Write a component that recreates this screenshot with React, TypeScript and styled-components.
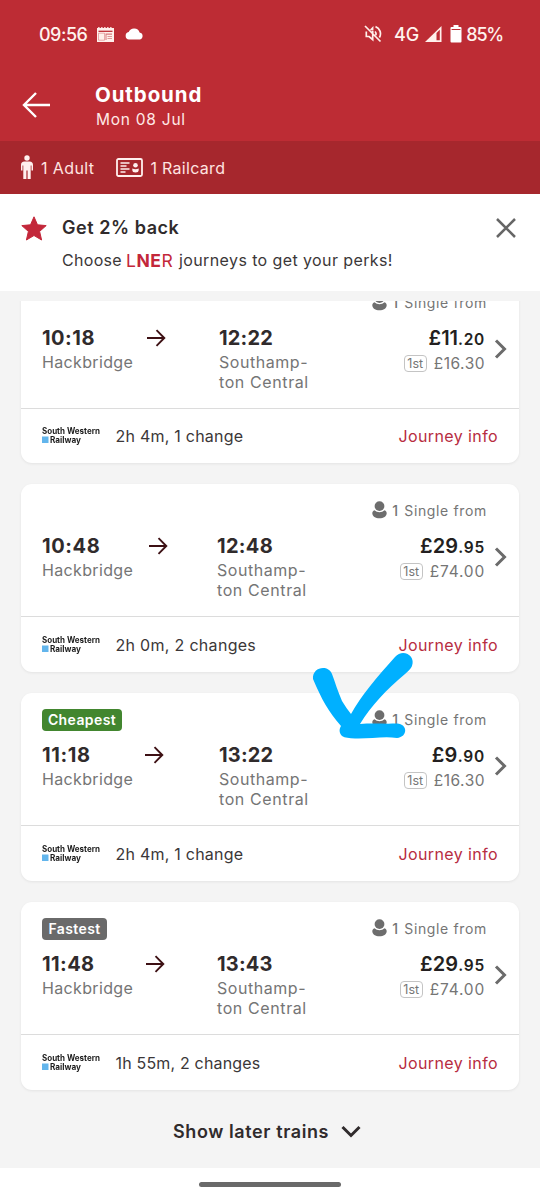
import React from "react";
import styled, { createGlobalStyle } from "styled-components";

const GlobalStyle = createGlobalStyle`
  * { box-sizing: border-box; }
  body {
    margin: 0;
    background: #fff;
    font-family: Inter, "Liberation Sans", sans-serif;
    font-size: 16px;
    color: #302b2c;
  }
`;

const Screen = styled.div`
  position: relative;
  width: 540px;
  height: 1200px;
  display: flex;
  flex-direction: column;
  overflow: hidden;
`;

/* Text with adjustable tracking */
const T = styled.span<{ $ls?: number; $l?: number }>`
  letter-spacing: ${(p) => p.$ls ?? 0}px;
  margin-left: ${(p) => p.$l ?? 0}px;
  white-space: nowrap;
`;

const Header = styled.header`
  height: 141px;
  background: #bd2c34;
  color: #fff;
`;
const StatusBar = styled.div`
  height: 68px;
  padding: 0 37px 0 39px;
  display: flex;
  align-items: center;
  font-size: 18px;
  font-weight: 500;
  color: #fff3ee;
`;
const StatusIcon = styled.svg<{ $l: number }>`
  display: block;
  flex: none;
  margin-left: ${(p) => p.$l}px;
`;
const StatusRight = styled.div`
  margin-left: auto;
  display: flex;
  align-items: center;
`;
const TitleRow = styled.div`
  display: flex;
  padding: 15px 0 0 22px;
`;
const BackIcon = styled.svg`
  display: block;
  margin-top: 9px;
`;
const TitleBlock = styled.div`
  margin-left: 45px;
`;
const Title = styled.div`
  font-size: 20.5px;
  line-height: 24px;
  font-weight: 700;
`;
const Subtitle = styled.div`
  font-size: 15.5px;
  line-height: 25px;
  padding-left: 1px;
  color: #ffe9e6;
`;

const PassengerBar = styled.div`
  height: 53px;
  background: #a6272d;
  color: #ffe4e1;
  display: flex;
  align-items: center;
  padding-left: 21px;
  font-size: 16px;
`;
const BarIcon = styled.svg<{ $l?: number; $r: number }>`
  display: block;
  flex: none;
  margin: 0 ${(p) => p.$r}px 0 ${(p) => p.$l ?? 0}px;
`;

const Promo = styled.section`
  height: 97px;
  background: #fff;
  display: flex;
  padding: 22px 23px 0 21px;
`;
const StarIcon = styled.svg`
  display: block;
  flex: none;
`;
const PromoText = styled.div`
  margin-left: 15px;
  flex: 1;
`;
const PromoTitle = styled.div`
  font-size: 18px;
  font-weight: 600;
  line-height: 24px;
`;
const PromoCopy = styled.div`
  display: flex;
  align-items: center;
  height: 24px;
  margin-top: 8px;
  font-size: 16px;
  color: #3b3738;
`;
const Brand = styled.span`
  width: 48px;
  margin: 0 5px 0 4px;
  color: #c3273a;
  font-size: 17.5px;
  letter-spacing: 0.6px;
  white-space: nowrap;
  b { font-weight: 700; }
`;

const List = styled.main`
  height: 877px;
  background: #f4f4f4;
  padding-top: 10px;
`;
const Scroller = styled.div`
  height: 867px;
  overflow: hidden;
`;
const Cards = styled.div`
  margin-top: -25px;
  padding: 0 21px;
  display: flex;
  flex-direction: column;
  gap: 21px;
`;
const Card = styled.article`
  height: 188px;
  display: flex;
  flex-direction: column;
  background: #fff;
  border-radius: 11px;
  box-shadow: 0 1px 3px rgba(0, 0, 0, 0.07);
  &:first-child { height: 187px; }
`;
const Body = styled.div`
  height: 133px;
  padding: 16px 0 0 21px;
  border-bottom: 1px solid #dcdcdc;
`;
const TopRow = styled.div`
  height: 22px;
  display: flex;
  align-items: center;
  padding-right: 32px;
`;
const Tag = styled.span<{ $bg: string; $w: number }>`
  width: ${(p) => p.$w}px;
  height: 22px;
  border-radius: 4px;
  background: ${(p) => p.$bg};
  color: #fff;
  font-size: 14px;
  font-weight: 600;
  line-height: 22px;
  text-align: center;
`;
const FareLabel = styled.div`
  margin: -2px 0 0 auto;
  display: flex;
  align-items: center;
  font-size: 14px;
  color: #757575;
`;
const PersonIcon = styled.svg`
  display: block;
  margin: 0 5px 0 0;
`;
const Count = styled.span`
  width: 12px;
  font-weight: 500;
`;
const MainRow = styled.div`
  margin-top: 12px;
  display: flex;
`;
const Route = styled.div<{ $origin: number }>`
  display: grid;
  grid-template-columns: ${(p) => p.$origin}px auto;
  grid-template-rows: 24px 43px;
`;
const TimeCell = styled.div`
  display: flex;
  align-items: center;
  font-size: 20px;
  font-weight: 700;
`;
const ArrowSlot = styled.div`
  flex: 1;
  display: flex;
  justify-content: center;
`;
const Station = styled.div`
  padding-top: 2px;
  font-size: 16px;
  line-height: 20px;
  color: #757575;
`;
const Fares = styled.div`
  margin-left: auto;
  display: flex;
  flex-direction: column;
  align-items: flex-end;
`;
const Price = styled.div`
  height: 24px;
  line-height: 24px;
  font-size: 20px;
  font-weight: 600;
  white-space: nowrap;
  color: #231f20;
`;
const Pence = styled.span`
  font-size: 15.5px;
  font-weight: 600;
`;
const FirstClass = styled.div`
  height: 24px;
  margin-top: 1px;
  display: flex;
  align-items: center;
  font-size: 15.5px;
  color: #757575;
`;
const ClassBadge = styled.span`
  width: 23px;
  height: 17px;
  margin: 1px 7px 0 0;
  border: 1px solid #c4c4c4;
  border-radius: 4px;
  font-size: 12.5px;
  line-height: 15px;
  text-align: center;
`;
const Chevron = styled.svg`
  display: block;
  margin: 12px 12px 0 9px;
`;
const Footer = styled.div`
  flex: 1;
  padding: 0 21px 0 21px;
  display: flex;
  align-items: center;
  font-size: 16px;
  color: #3b3738;
`;
const OperatorLogo = styled.svg`
  display: block;
  overflow: visible;
  margin: -2px 13.5px 0 0;
  filter: blur(0.6px);
`;
const InfoLink = styled.a`
  margin-left: auto;
  color: #b72c41;
`;
const Later = styled.div`
  height: 83px;
  display: flex;
  align-items: center;
  padding-left: 173px;
  font-size: 18px;
  font-weight: 600;
`;
const LaterChevron = styled.svg`
  display: block;
  margin-left: 12px;
`;
const NavBar = styled.div`
  height: 32px;
  background: #fff;
  display: flex;
  justify-content: center;
  padding-top: 13.5px;
`;
const Pill = styled.div`
  width: 142px;
  height: 5.5px;
  border-radius: 3px;
  background: #696969;
`;
const Doodle = styled.svg`
  position: absolute;
  left: 305px;
  top: 645px;
`;

type Txt = [string, number];
interface Journey {
  dep: Txt;
  arr: Txt;
  origin: number;
  pounds: Txt;
  pence: Txt;
  first: Txt;
  summary: Txt;
  tag?: { text: Txt; bg: string; w: number };
}

const journeys: Journey[] = [
  { dep: ["10:18", 0.5], arr: ["12:22", 0.2], origin: 177, pounds: ["£11", 0], pence: [".20", 0.7], first: ["£16.30", 0.5], summary: ["2h 4m, 1 change", 0.23] },
  { dep: ["10:48", 0.6], arr: ["12:48", 0.3], origin: 175, pounds: ["£29", 0.1], pence: [".95", 0.8], first: ["£74.00", 0.8], summary: ["2h 0m, 2 changes", 0.3] },
  { dep: ["11:18", 0.6], arr: ["13:22", 0.2], origin: 177, pounds: ["£9", 0.3], pence: [".90", 0.8], first: ["£16.30", 0.5], summary: ["2h 4m, 1 change", 0.23], tag: { text: ["Cheapest", 0.4], bg: "#42862f", w: 80 } },
  { dep: ["11:48", 0.4], arr: ["13:43", 0.2], origin: 175, pounds: ["£29", 0.1], pence: [".95", 0.8], first: ["£74.00", 0.8], summary: ["1h 55m, 2 changes", 0.18], tag: { text: ["Fastest", 0.4], bg: "#6a6a6a", w: 65 } },
];

function JourneyCard({ j }: { j: Journey }) {
  return (
    <Card>
      <Body>
        <TopRow>
          {j.tag && (
            <Tag $bg={j.tag.bg} $w={j.tag.w}>
              <T $ls={j.tag.text[1]}>{j.tag.text[0]}</T>
            </Tag>
          )}
          <FareLabel>
            <PersonIcon width="15" height="18" viewBox="0 0 15 18" fill="#6d6d6d">
              <circle cx="7.5" cy="5.100" r="4.900" />
              <path d="M2.500 9.200c2.600 2.600 7.400 2.600 10 0 1.500.5 2.200 1.600 2.200 3 0 3-3.200 5-7.200 5s-7.200-2-7.200-5c0-1.400.7-2.500 2.200-3z" />
            </PersonIcon>
            <Count>1</Count>
            <T $ls={0.65}>Single from</T>
          </FareLabel>
        </TopRow>
        <MainRow>
          <Route $origin={j.origin}>
            <TimeCell>
              <T $ls={j.dep[1]}>{j.dep[0]}</T>
              <ArrowSlot>
                <svg width="20" height="18" viewBox="0 0 20 18" fill="none" stroke="#3d1014" strokeWidth="1.900">
                  <path d="M0 9H17.300M9.500 1.200L17.300 9l-7.800 7.800" />
                </svg>
              </ArrowSlot>
            </TimeCell>
            <TimeCell>
              <T $ls={j.arr[1]}>{j.arr[0]}</T>
            </TimeCell>
            <Station>
              <T $ls={0.35}>Hackbridge</T>
            </Station>
            <Station>
              <T $ls={0.55}>Southamp-</T>
              <br />
              <T $ls={0.6}>ton Central</T>
            </Station>
          </Route>
          <Fares>
            <Price>
              <T $ls={j.pounds[1]}>{j.pounds[0]}</T>
              <Pence>
                <T $ls={j.pence[1]}>{j.pence[0]}</T>
              </Pence>
            </Price>
            <FirstClass>
              <ClassBadge>1st</ClassBadge>
              <T $ls={j.first[1]}>{j.first[0]}</T>
            </FirstClass>
          </Fares>
          <Chevron width="13" height="22" viewBox="0 0 13 22" fill="none" stroke="#6b6b6b" strokeWidth="3">
            <path d="M2 2.500L10.500 11L2 19.500" />
          </Chevron>
        </MainRow>
      </Body>
      <Footer>
        <OperatorLogo width="60" height="20" viewBox="0 0 60 20" fontFamily="Inter, sans-serif" fontWeight="700" fontSize="8.500" fill="#1c1c1c">
          <text x="0" y="9" textLength="58" lengthAdjust="spacingAndGlyphs">South Western</text>
          <rect x="0" y="11.500" width="6.500" height="6.500" fill="#62b5ec" />
          <text x="8" y="17.500" textLength="31" lengthAdjust="spacingAndGlyphs">Railway</text>
        </OperatorLogo>
        <T $ls={j.summary[1]}>{j.summary[0]}</T>
        <InfoLink>
          <T $ls={0.4}>Journey info</T>
        </InfoLink>
      </Footer>
    </Card>
  );
}

export default function App() {
  return (
    <Screen>
      <GlobalStyle />
      <Header>
        <StatusBar>
          <T $ls={-0.5}>09:56</T>
          <StatusIcon $l={9.5} width="17" height="15" viewBox="0 0 17 15">
            <path d="M0 1h1.200V0h1.300v1h1.700V0h1.300v1h1.700V0h1.300v1h1.700V0h1.300v1h1.700V0h1.300v1H17v14H0z" fill="#fff0eb" />
            <path d="M1.500 4.300h14" stroke="#bd2c34" strokeWidth="1.300" />
            <path d="M1.500 6.200h6v7h-6z" fill="none" stroke="#bd2c34" strokeWidth=".7" opacity="0.500" />
            <path d="M8.500 6.500h6.500v1.200H8.500zM8.500 7h1v6h-1zM10.500 9h4.500v.8h-4.500zM10.500 11.300h4.500v.8h-4.500z" fill="#bd2c34" opacity="0.600" />
          </StatusIcon>
          <StatusIcon $l={11} width="19" height="12" viewBox="0 0 19 12" fill="#fff">
            <path d="M4 11.500A3.800 3.800 0 0 1 3.700 4 5.800 5.800 0 0 1 14.600 4.500 3.600 3.600 0 0 1 15 11.500z" />
          </StatusIcon>
          <StatusRight>
            <StatusIcon $l={0} width="18" height="18" viewBox="0 0 18 18" fill="none" stroke="#fff0eb" strokeWidth="1.700">
              <path d="M1 1l15.500 15.500M2.300 6.500v5h2.800l3.600 3.200V6M6.600 5l2-2v2.500M11 6.500q1.600 1.600.8 3.800M11.500 1.600A7.500 7.500 0 0 1 15.400 12.500" />
            </StatusIcon>
            <T $ls={0} $l={12}>4G</T>
            <StatusIcon $l={6} width="17" height="16" viewBox="0 0 17 16">
              <path d="M0 16L16.500 0V16z" fill="#fff0eb" />
              <path d="M11.500 7L14.800 3.800V14.300H11.500z" fill="#bd2c34" />
            </StatusIcon>
            <StatusIcon $l={8} width="12" height="18" viewBox="0 0 12 18">
              <path d="M3.500 0h5v2H10.500a1 1 0 0 1 1 1V16.500a1 1 0 0 1-1 1H1.500a1 1 0 0 1-1-1V3a1 1 0 0 1 1-1h2z" fill="#fff" />
              <path d="M1.600 4.500h8.800" stroke="#bd2c34" strokeWidth="1" />
            </StatusIcon>
            <T $ls={-1.2} $l={4}>85%</T>
          </StatusRight>
        </StatusBar>
        <TitleRow>
          <BackIcon width="28" height="26" viewBox="0 0 28 26" fill="none" stroke="#fff" strokeWidth="2.400">
            <path d="M28 13H2M14 1L2 13L14 25" />
          </BackIcon>
          <TitleBlock>
            <Title><T $ls={0.9}>Outbound</T></Title>
            <Subtitle><T $ls={0.75}>Mon 08 Jul</T></Subtitle>
          </TitleBlock>
        </TitleRow>
      </Header>
      <PassengerBar>
        <BarIcon $r={8} width="12" height="25" viewBox="0 0 12 25" fill="#fff0ee">
          <circle cx="6" cy="3" r="2.700" />
          <path d="M3.500 6.500h5C10.800 6.500 12 8 12 10v5.500h-1.500V10.500h-.8V24H6.600V15.500H5.400V24H2.300V10.500h-.8V15.500H0V10C0 8 1.200 6.500 3.500 6.500z" />
        </BarIcon>
        <T $ls={0.4}>1 Adult</T>
        <BarIcon $l={22} $r={7} width="27" height="19" viewBox="0 0 27 19" fill="none" stroke="#fff0ee" strokeWidth="1.800">
          <rect x="1" y="1" width="25" height="17" rx="1.500" />
          <path d="M4.500 5h9M4.500 8h6M4.500 11h9M4.500 14h5" strokeWidth="1.600" />
          <circle cx="19.500" cy="7.200" r="2.300" fill="#fff0ee" stroke="none" />
          <path d="M16.300 10.600q3.200 1.400 6.400 0v1.500q0 2.500-3.200 2.500t-3.200-2.500z" fill="#fff0ee" stroke="none" />
        </BarIcon>
        <T $ls={0.3}>1 Railcard</T>
      </PassengerBar>
      <Promo>
        <StarIcon width="26" height="26" viewBox="0 0 26 26" fill="#c3273a">
          <path d="M13 .8l3.500 8 8.700.8-6.600 5.800 2 8.600L13 19.500 5.400 24l2-8.600L.8 9.600l8.700-.8z" stroke="#c3273a" strokeWidth="1" strokeLinejoin="round" />
        </StarIcon>
        <PromoText>
          <PromoTitle><T $ls={0.55}>Get 2% back</T></PromoTitle>
          <PromoCopy>
            <T $ls={0.3}>Choose</T>
            <Brand>L<b>NE</b>R</Brand>
            <T $ls={0.4}>journeys to get your perks!</T>
          </PromoCopy>
        </PromoText>
        <svg width="22" height="22" viewBox="0 0 22 22" fill="none" stroke="#666" strokeWidth="2.500">
          <path d="M2 3L20 21M20 3L2 21" />
        </svg>
      </Promo>
      <List>
        <Scroller>
          <Cards>
            {journeys.map((j, i) => (
              <JourneyCard key={i} j={j} />
            ))}
          </Cards>
          <Later>
            <T $ls={0.6}>Show later trains</T>
            <LaterChevron width="20" height="14" viewBox="0 0 20 14" fill="none" stroke="#302b2c" strokeWidth="3">
              <path d="M1.500 2L10 10.500L18.500 2" />
            </LaterChevron>
          </Later>
        </Scroller>
      </List>
      <NavBar>
        <Pill />
      </NavBar>
      <Doodle width="115" height="100" viewBox="305 645 115 100" fill="#00b0ff">
        <path d="M313 679C312 667 328 664 332 674C335 682 338 692 342 701C345 706 348 710 351 714C361 696 377 677 395 657C403 648 416 656 412 666C411 669 408 671 405 674C386 690 371 706 360 724C372 723 384 724 397 723.500C408 724 408 737 397 738C384 736 369 739 355 738.500C349 738 345 738 342 736C339 733 339 729 341 726C328 711 322 700 313 679Z" />
      </Doodle>
    </Screen>
  );
}
